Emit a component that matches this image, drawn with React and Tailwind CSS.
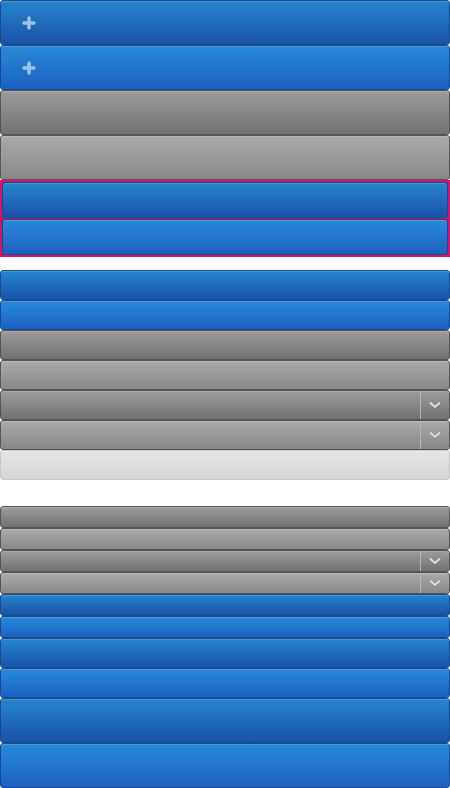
import React from 'react';

const blueA = "bg-gradient-to-b from-[#2784cc] to-[#1953a8] border-[#174c92]";
const blueB = "bg-gradient-to-b from-[#2a8ad8] to-[#1c60bf] border-[#174c92]";
const grayA = "bg-gradient-to-b from-[#9c9c9c] to-[#727272] border-[#555555]";
const grayB = "bg-gradient-to-b from-[#ababab] to-[#888888] border-[#555555]";
const light = "bg-gradient-to-b from-[#e6e6e6] to-[#d4d4d4] border-[#c8c8c8]";

const Plus = () => (
    <svg width="14" height="14" viewBox="0 0 14 14" className="ml-[21px]">
        <path d="M7 2v10M2 7h10" stroke="#9cc3ec" strokeWidth="3.5" strokeLinecap="round" />
    </svg>
);

const Chevron = () => (
    <svg width="14" height="10" viewBox="0 0 14 10">
        <path d="M2.5 3.5l4.5 4 4.5-4" fill="none" stroke="#5d5d5d" strokeWidth="3" strokeLinecap="round" transform="translate(0 -0.5)" />
        <path d="M2.5 3l4.5 4 4.5-4" fill="none" stroke="#d6d6d6" strokeWidth="2.4" strokeLinecap="round" />
    </svg>
);

const Btn = ({ h, tone, icon, select }) => (
    <div className={`${h} ${tone} border rounded-[3px] flex items-center shadow-[inset_0_1px_0_rgba(255,255,255,0.15)]`}>
        {icon && <Plus />}
        {select && (
            <div className="ml-auto h-full w-[29px] border-l border-[#b4b4b4] flex items-center justify-center">
                <Chevron />
            </div>
        )}
    </div>
);

const App = () => {
    return (
        <div className="w-[450px] h-[788px] bg-white flex flex-col overflow-hidden">
            <Btn h="h-[45px]" tone={blueA} icon />
            <Btn h="h-[45px]" tone={blueB} icon />
            <Btn h="h-[45px]" tone={grayA} />
            <Btn h="h-[45px]" tone={grayB} />

            {/* focused group */}
            <div className="border-2 border-[#d9116b] bg-[#c4105f] flex flex-col gap-[1px]">
                <Btn h="h-[36px]" tone={blueA} />
                <Btn h="h-[36px]" tone={blueB} />
            </div>

            <div className="h-[13px]"></div>

            <Btn h="h-[30px]" tone={blueA} />
            <Btn h="h-[30px]" tone={blueB} />
            <Btn h="h-[30px]" tone={grayA} />
            <Btn h="h-[30px]" tone={grayB} />
            <Btn h="h-[30px]" tone={grayA} select />
            <Btn h="h-[30px]" tone={grayB} select />
            <Btn h="h-[30px]" tone={light} />

            <div className="h-[26px]"></div>

            <Btn h="h-[22px]" tone={grayA} />
            <Btn h="h-[22px]" tone={grayB} />
            <Btn h="h-[22px]" tone={grayA} select />
            <Btn h="h-[22px]" tone={grayB} select />
            <Btn h="h-[22px]" tone={blueA} />
            <Btn h="h-[22px]" tone={blueB} />
            <Btn h="h-[30px]" tone={blueA} />
            <Btn h="h-[30px]" tone={blueB} />
            <Btn h="h-[45px]" tone={blueA} />
            <Btn h="h-[45px]" tone={blueB} />
        </div>
    );
};

export default App;
